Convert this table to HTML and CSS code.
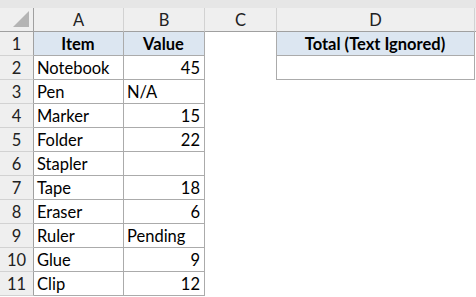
FILE: index.html
```html
<!DOCTYPE html>
<html>
<head>
<meta charset="utf-8">
<link rel="stylesheet" href="styles.css">
</head>
<body>
<div class="topstrip"></div>
<div class="sheet">
  <div class="corner"><div class="tri"></div></div>
  <div class="ch">A</div>
  <div class="ch">B</div>
  <div class="ch">C</div>
  <div class="ch">D</div>
  <div class="ch last"></div>

  <div class="rh">1</div>
  <div class="c hd">Item</div>
  <div class="c hd">Value</div>
  <div class="c e bl"></div>
  <div class="c hd">Total (Text Ignored)</div>
  <div class="c e"></div>

  <div class="rh">2</div>
  <div class="c">Notebook</div>
  <div class="c n">45</div>
  <div class="c e bl"></div>
  <div class="c"></div>
  <div class="c e"></div>

  <div class="rh">3</div>
  <div class="c">Pen</div>
  <div class="c">N/A</div>
  <div class="c e"></div><div class="c e"></div><div class="c e"></div>

  <div class="rh">4</div>
  <div class="c">Marker</div>
  <div class="c n">15</div>
  <div class="c e"></div><div class="c e"></div><div class="c e"></div>

  <div class="rh">5</div>
  <div class="c">Folder</div>
  <div class="c n">22</div>
  <div class="c e"></div><div class="c e"></div><div class="c e"></div>

  <div class="rh">6</div>
  <div class="c">Stapler</div>
  <div class="c"></div>
  <div class="c e"></div><div class="c e"></div><div class="c e"></div>

  <div class="rh">7</div>
  <div class="c">Tape</div>
  <div class="c n">18</div>
  <div class="c e"></div><div class="c e"></div><div class="c e"></div>

  <div class="rh">8</div>
  <div class="c">Eraser</div>
  <div class="c n">6</div>
  <div class="c e"></div><div class="c e"></div><div class="c e"></div>

  <div class="rh">9</div>
  <div class="c">Ruler</div>
  <div class="c">Pending</div>
  <div class="c e"></div><div class="c e"></div><div class="c e"></div>

  <div class="rh">10</div>
  <div class="c">Glue</div>
  <div class="c n">9</div>
  <div class="c e"></div><div class="c e"></div><div class="c e"></div>

  <div class="rh">11</div>
  <div class="c">Clip</div>
  <div class="c n">12</div>
  <div class="c e"></div><div class="c e"></div><div class="c e"></div>
</div>
</body>
</html>
```

FILE: styles.css
```css
html, body {
  margin: 0;
  padding: 0;
  background: #ffffff;
}
body {
  width: 476px;
  height: 297px;
  overflow: hidden;
  font-family: Lato, "Open Sans", sans-serif;
  font-size: 16.5px;
  color: #000;
}
.topstrip {
  height: 8px;
  background: #e6e6e6;
}
.sheet {
  display: grid;
  grid-template-columns: 34px 90px 81px 72px 198px 1px;
  grid-auto-rows: 24px;
}
.sheet > div {
  box-sizing: border-box;
  display: flex;
  align-items: center;
  white-space: nowrap;
  overflow: hidden;
}
.corner {
  background: #efefef;
  border-right: 1px solid #a0a0a0;
  border-bottom: 1px solid #a0a0a0;
  position: relative;
}
.tri {
  position: absolute;
  right: 4px;
  bottom: 4px;
  width: 0;
  height: 0;
  border-left: 16px solid transparent;
  border-bottom: 16px solid #b4b4b4;
}
.ch {
  background: #efefef;
  border-right: 1px solid #d2d2d2;
  border-bottom: 1px solid #a0a0a0;
  justify-content: center;
  color: #222;
}
.ch.last {
  border-right: none;
}
.rh {
  background: #efefef;
  border-right: 1px solid #a0a0a0;
  border-bottom: 1px solid #d2d2d2;
  justify-content: center;
  color: #222;
}
.c {
  border-right: 1px solid #ababab;
  border-bottom: 1px solid #ababab;
  padding: 0 4px 0 3px;
}
.c.n {
  justify-content: flex-end;
}
.c.e {
  border-right: none;
  border-bottom: none;
}
.c.e.bl {
  border-right: 1px solid #ababab;
}
.c.hd {
  background: #dce6f1;
  font-weight: bold;
  justify-content: center;
}
```
